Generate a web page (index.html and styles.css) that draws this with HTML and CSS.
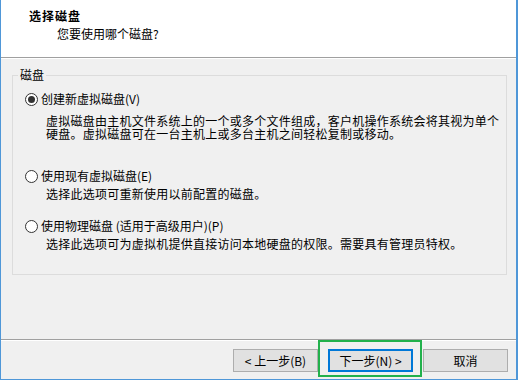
FILE: index.html
```html
<!DOCTYPE html>
<html lang="zh-CN">
<head>
    <meta charset="UTF-8">
    <title>选择磁盘</title>
    <link rel="stylesheet" href="styles.css">
</head>
<body>
    <div class="window">
        <div class="header">
            <div class="title">选择磁盘</div>
            <div class="subtitle">您要使用哪个磁盘?</div>
        </div>

        <div class="content">
            <fieldset class="group">
                <legend>磁盘</legend>

                <label class="option opt-first">
                    <input type="radio" name="disk" checked>
                    <span>创建新虚拟磁盘(V)</span>
                </label>
                <div class="desc desc-first">虚拟磁盘由主机文件系统上的一个或多个文件组成，客户机操作系统会将其视为单个<br>硬盘。虚拟磁盘可在一台主机上或多台主机之间轻松复制或移动。</div>

                <label class="option opt-second">
                    <input type="radio" name="disk">
                    <span>使用现有虚拟磁盘(E)</span>
                </label>
                <div class="desc">选择此选项可重新使用以前配置的磁盘。</div>

                <label class="option opt-third">
                    <input type="radio" name="disk">
                    <span>使用物理磁盘 (适用于高级用户)(P)</span>
                </label>
                <div class="desc">选择此选项可为虚拟机提供直接访问本地硬盘的权限。需要具有管理员特权。</div>
            </fieldset>
        </div>

        <div class="footer">
            <button>&lt; 上一步(B)</button>
            <button class="default">下一步(N) &gt;</button>
            <button>取消</button>
        </div>

        <div class="highlight"></div>
    </div>
</body>
</html>
```

FILE: styles.css
```css
body {
    margin: 0;
    font-family: "Noto Sans CJK SC", "Noto Sans", sans-serif;
    font-size: 12px;
    color: #000000;
    background: #f0f0f0;
}
.window {
    position: relative;
    width: 518px;
    height: 380px;
    box-sizing: border-box;
    border-left: 1px solid #4f97d8;
    border-right: 2px solid #4f97d8;
    border-bottom: 1px solid #4f97d8;
    background: #f0f0f0;
    display: flex;
    flex-direction: column;
}
.header {
    height: 48px;
    background: #ffffff;
    border-bottom: 1px solid #a0a0a0;
    padding-top: 9px;
}
.title {
    font-weight: bold;
    line-height: 14px;
    letter-spacing: 1px;
    padding-left: 28px;
}
.subtitle {
    line-height: 14px;
    margin-top: 4px;
    padding-left: 56px;
}
.content {
    flex: 1;
    border-top: 1px solid #ffffff;
    padding-top: 9px;
}
.group {
    margin: 0 9px 0 11px;
    padding: 10px 0 24px 12px;
    border: 1px solid #dcdcdc;
    min-width: 0;
}
.group legend {
    padding: 0 2px;
    margin-left: -7px;
    line-height: 14px;
}
.option {
    display: flex;
    align-items: center;
    gap: 3px;
    line-height: 14px;
}
.option input {
    appearance: none;
    -webkit-appearance: none;
    margin: 0;
    width: 13px;
    height: 13px;
    border: 1px solid #333333;
    border-radius: 50%;
    background: #ffffff;
    display: flex;
    align-items: center;
    justify-content: center;
}
.option input:checked::after {
    content: "";
    width: 7px;
    height: 7px;
    border-radius: 50%;
    background: #333333;
}
.opt-second {
    margin-top: 29px;
}
.opt-third {
    margin-top: 19px;
}
.desc {
    padding-left: 21px;
    margin-top: 4px;
    line-height: 13px;
    letter-spacing: 0.25px;
}
.desc-first {
    margin-top: 8px;
}
.footer {
    height: 40px;
    box-sizing: border-box;
    border-top: 1px solid #a0a0a0;
    box-shadow: inset 0 1px 0 #ffffff;
    padding: 9px 8px 0 0;
    display: flex;
    justify-content: flex-end;
    align-items: flex-start;
    gap: 10px;
}
.footer button {
    width: 85px;
    height: 23px;
    margin: 0;
    padding: 0;
    font-family: inherit;
    font-size: 12px;
    color: #000000;
    background: #e1e1e1;
    border: 1px solid #adadad;
}
.footer button.default {
    border: 2px solid #0078d7;
}
.highlight {
    position: absolute;
    left: 317px;
    top: 340px;
    width: 100px;
    height: 33px;
    border: 2px solid #22b14c;
}
```
